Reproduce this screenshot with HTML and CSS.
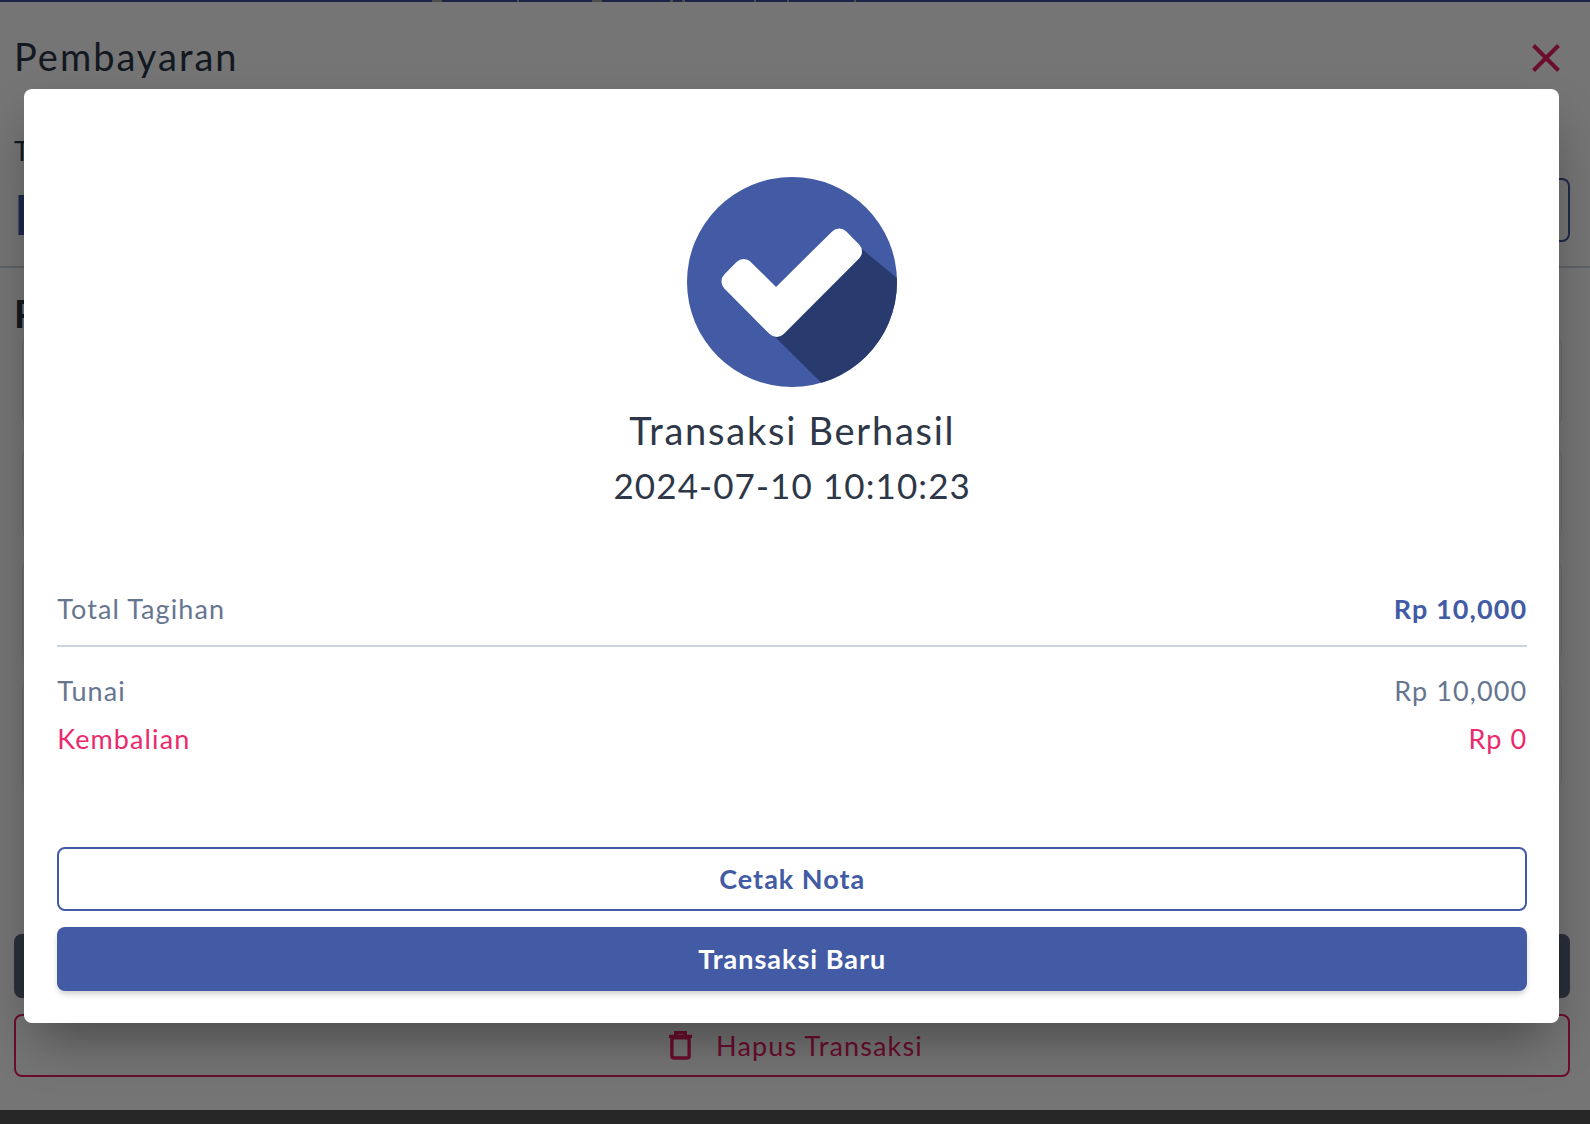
FILE: index.html
```html
<!DOCTYPE html>
<html lang="id">
<head>
    <meta charset="UTF-8">
    <meta name="viewport" content="width=device-width, initial-scale=1.0">
    <title>Pembayaran</title>
    <link rel="stylesheet" href="styles.css">
</head>
<body>
    <div class="page">
        <div class="top-bar"></div>
        <header class="page-header">
            <h1>Pembayaran</h1>
            <svg class="close-icon" viewBox="0 0 28 28" width="28" height="28">
                <path d="M1.5 1.5l25 25M26.5 1.5l-25 25"/>
            </svg>
        </header>
        <section class="total-row">
            <div class="total-info">
                <p class="total-label">Total Tagihan</p>
                <p class="total-value">Rp 10,000</p>
            </div>
            <button class="btn-ghost"></button>
        </section>
        <section class="product-list">
            <h2>Produk</h2>
            <div class="product-card card-a"></div>
            <div class="product-card card-b"></div>
            <div class="product-card card-c"></div>
            <div class="product-card card-d"></div>
        </section>
        <div class="page-actions">
            <button class="btn-dark"></button>
            <button class="btn-danger">
                <svg class="trash-icon" viewBox="0 0 24 30" width="23" height="29">
                    <path d="M0 5.500h24M7 4V1.500h10V4"/>
                    <rect x="3" y="7" width="18" height="21" rx="2"/>
                </svg>
                <span>Hapus Transaksi</span>
            </button>
        </div>
        <footer class="bottom-bar"></footer>
    </div>

    <div class="overlay">
        <div class="modal">
            <div class="result">
                <svg class="check-badge" viewBox="0 0 210 210" width="210" height="210">
                    <defs>
                        <clipPath id="badgeClip"><circle cx="105" cy="105" r="105"/></clipPath>
                    </defs>
                    <circle cx="105" cy="105" r="105" fill="#425ba4"/>
                    <polygon clip-path="url(#badgeClip)" fill="#283a6e" points="170,68 250,134 250,320 84,156"/>
                    <polygon fill="#fff" stroke="#fff" stroke-width="20" stroke-linejoin="round"
                        points="44.400,104.500 56.700,92 89,124 152.200,61.500 165,74.500 89.700,150"/>
                </svg>
                <h3>Transaksi Berhasil</h3>
                <p class="result-date">2024-07-10 10:10:23</p>
            </div>

            <div class="summary">
                <div class="summary-row summary-total">
                    <span>Total Tagihan</span>
                    <strong>Rp 10,000</strong>
                </div>
                <div class="summary-row">
                    <span>Tunai</span>
                    <span>Rp 10,000</span>
                </div>
                <div class="summary-row summary-change">
                    <span>Kembalian</span>
                    <span>Rp 0</span>
                </div>
            </div>

            <div class="modal-actions">
                <button class="btn-outline">Cetak Nota</button>
                <button class="btn-primary">Transaksi Baru</button>
            </div>
        </div>
    </div>
</body>
</html>
```

FILE: styles.css
```css
* {
    box-sizing: border-box;
}
html, body {
    margin: 0;
    height: 100%;
}
body {
    position: relative;
    overflow: hidden;
    background: #fff;
    font-family: Lato, "Noto Sans", sans-serif;
    color: #2d3748;
}
button {
    font-family: inherit;
    cursor: pointer;
}
.page {
    height: 1124px;
    display: flex;
    flex-direction: column;
}
/* bits of the scrolled-off navbar peek through here */
.top-bar {
    height: 2px;
    background: linear-gradient(90deg,
        #3c5296 432px, #a8a8a8 432px, #a8a8a8 442px,
        #3c5296 442px, #3c5296 517px, #a8a8a8 517px, #a8a8a8 519px,
        #3c5296 519px, #3c5296 592px, #a8a8a8 592px, #a8a8a8 602px,
        #3c5296 602px, #3c5296 670px, #a8a8a8 670px, #a8a8a8 673px,
        #3c5296 673px, #3c5296 682px, #a8a8a8 682px, #a8a8a8 685px,
        #3c5296 685px, #3c5296 754px, #a8a8a8 754px, #a8a8a8 756px,
        #3c5296 756px, #3c5296 787px, #a8a8a8 787px, #a8a8a8 789px,
        #3c5296 789px, #3c5296 854px, #a8a8a8 854px, #a8a8a8 856px,
        #3c5296 856px);
}
.page-header {
    height: 94px;
    padding: 18px 30px 0 14px;
    display: flex;
    justify-content: space-between;
    align-items: center;
}
.page-header h1 {
    margin: -4px 0 0;
    font-size: 38px;
    font-weight: 400;
    letter-spacing: 2px;
}
.close-icon {
    fill: none;
    stroke: #e91e63;
    stroke-width: 4;
}
.total-row {
    height: 172px;
    padding: 38px 20px 0 14px;
    display: flex;
    justify-content: space-between;
    align-items: flex-start;
    border-bottom: 2px solid #cbd5e0;
}
.total-info p {
    margin: 0;
}
.total-label {
    font-size: 27px;
    line-height: 34px;
}
.total-info .total-value {
    margin-top: 18px;
    font-size: 56px;
    font-weight: 700;
    line-height: 56px;
    color: #425ba4;
}
.btn-ghost {
    margin-top: 44px;
    width: 300px;
    height: 64px;
    border: 2px solid #425ba4;
    border-radius: 8px;
    background: #fff;
}
.product-list {
    flex: 1;
    padding: 22px 28px 0 22px;
}
.product-list h2 {
    margin: 0 0 0 -8px;
    font-size: 38px;
    line-height: 46px;
    font-weight: 700;
}
.product-card {
    border: 1px solid #e2e8f0;
    border-radius: 8px;
    margin-bottom: 23px;
}
.card-a {
    height: 90px;
}
.card-b {
    height: 90px;
}
.card-c {
    height: 98px;
}
.card-d {
    height: 105px;
}
.page-actions {
    padding: 0 20px 33px 14px;
    display: flex;
    flex-direction: column;
    gap: 16px;
}
.btn-dark {
    height: 64px;
    border: 0;
    border-radius: 8px;
    background: #5d6880;
    color: #fff;
    font-size: 27px;
}
.btn-danger {
    height: 63px;
    padding: 0 0 0 8px;
    border: 2px solid #e91e63;
    border-radius: 8px;
    background: #fff;
    color: #e91e63;
    font-size: 27px;
    letter-spacing: 1.150px;
    display: flex;
    align-items: center;
    justify-content: center;
    gap: 24px;
}
.trash-icon {
    fill: none;
    stroke: #e91e63;
    stroke-width: 3.500;
}
.bottom-bar {
    height: 14px;
    background: #555;
}
.overlay {
    position: absolute;
    inset: 0;
    background: rgba(0, 0, 0, 0.54);
    padding: 89px 30.750px 101px 24.250px;
}
.modal {
    height: 934px;
    padding: 88px 32px 32px 33px;
    background: #fff;
    border-radius: 8px;
    box-shadow: 0 25px 50px -12px rgba(0, 0, 0, 0.4);
    display: flex;
    flex-direction: column;
}
.result {
    height: 380px;
    text-align: center;
}
.check-badge {
    display: block;
    margin: 0 auto;
}
.result h3 {
    margin: 20px 0 0;
    font-size: 38px;
    line-height: 46px;
    font-weight: 400;
    letter-spacing: 1.750px;
}
.result-date {
    margin: 9px 0 0;
    font-size: 35px;
    line-height: 46px;
    letter-spacing: 1.100px;
}
.summary {
    margin-top: 24px;
    font-size: 27px;
    letter-spacing: 1.100px;
    color: #667590;
}
.summary-row {
    display: flex;
    justify-content: space-between;
    align-items: center;
    height: 48px;
}
.summary-total {
    height: 66px;
    margin-bottom: 19px;
    padding-bottom: 10px;
    border-bottom: 2px solid #cbd2e0;
}
.summary-total strong {
    color: #425ba4;
}
.summary-change {
    color: #ea2a6c;
}
.modal-actions {
    margin-top: auto;
    display: flex;
    flex-direction: column;
    gap: 16px;
}
.btn-outline, .btn-primary {
    height: 64px;
    padding-bottom: 2px;
    border-radius: 8px;
    font-size: 27px;
    font-weight: 700;
    letter-spacing: 1px;
}
.btn-outline {
    border: 2px solid #425ba4;
    background: #fff;
    color: #425ba4;
}
.btn-primary {
    border: 0;
    background: #425ba4;
    color: #fff;
    box-shadow: 0 4px 6px -1px rgba(0, 0, 0, 0.2);
}
```
